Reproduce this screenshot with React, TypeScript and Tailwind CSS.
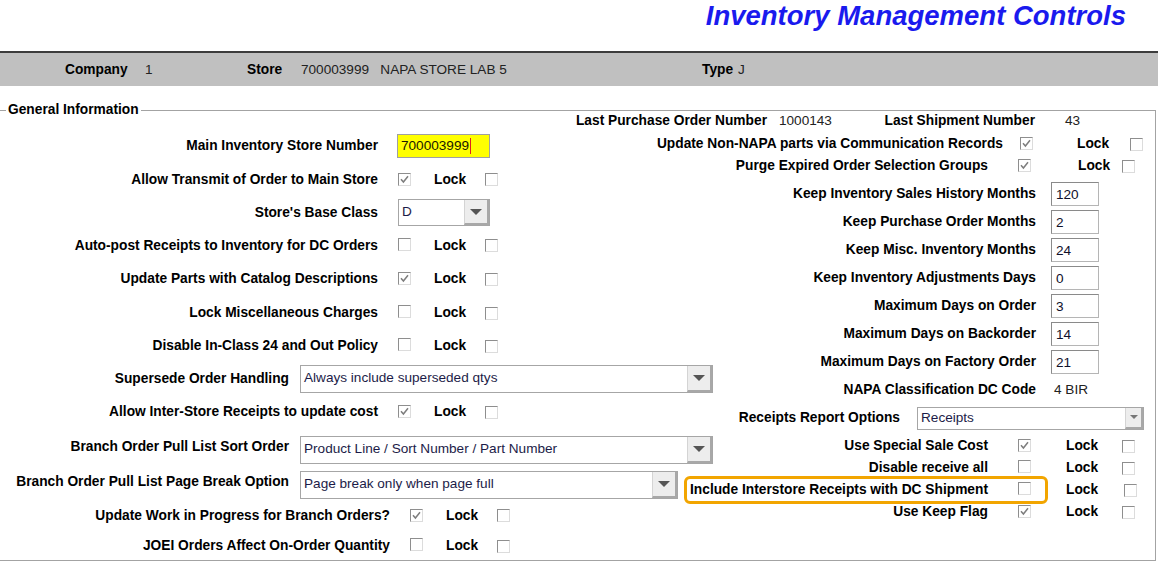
import React from 'react';

const label = 'shrink-0 font-bold text-[13.75px] leading-[16px] text-black whitespace-nowrap';
const value = 'shrink-0 text-[13.6px] leading-[16px] text-[#222] whitespace-nowrap';

function Check({ checked = false }: { checked?: boolean }) {
  return (
    <span className="inline-flex h-[13px] w-[13px] shrink-0 items-center justify-center border border-t-[#8e8e8e] border-l-[#8e8e8e] border-r-[#dcdcdc] border-b-[#dcdcdc] bg-white">
      {checked && (
        <svg width="11" height="11" viewBox="0 0 11 11">
          <path d="M2 5.2 L4.4 8 L9 2.2" fill="none" stroke="#7d7d7d" strokeWidth="1.5" />
        </svg>
      )}
    </span>
  );
}

function Arrow({ small = false }: { small?: boolean }) {
  return (
    <div
      className={
        small
          ? 'flex h-full w-[18px] items-center justify-center border-l border-[#d4d4d4] border-r-2 border-b-2 border-r-[#a8a8a8] border-b-[#a8a8a8] bg-[#ededed]'
          : 'flex h-full w-[25px] items-center justify-center border-l border-[#d4d4d4] border-r-2 border-b-2 border-r-[#a8a8a8] border-b-[#a8a8a8] bg-[#ededed]'
      }
    >
      <span
        className={
          small
            ? 'h-0 w-0 border-l-[4px] border-r-[4px] border-t-[4px] border-l-transparent border-r-transparent border-t-[#777]'
            : 'h-0 w-0 border-l-[6px] border-r-[6px] border-t-[6px] border-l-transparent border-r-transparent border-t-[#555]'
        }
      />
    </div>
  );
}

function Select({ text, className, small = false }: { text: string; className: string; small?: boolean }) {
  return (
    <div className={'flex shrink-0 items-stretch border border-[#a6a6a6] bg-white ' + className}>
      <div className="flex flex-1 items-center overflow-hidden pl-[3px] text-[13.6px] text-[#1c1c48] whitespace-nowrap">
        {text}
      </div>
      <Arrow small={small} />
    </div>
  );
}

function NumBox({ v }: { v: string }) {
  return (
    <div className="ml-[15px] flex h-[24px] w-[48px] shrink-0 items-end border border-t-[#8a8a8a] border-l-[#8a8a8a] border-r-[#b5b5b5] border-b-[#b5b5b5] bg-white pb-[2px] pl-[4px] text-[13.6px] leading-[16px] text-[#10102a]">
      {v}
    </div>
  );
}

// left column row with checkbox + Lock + checkbox
function LeftCheck({ text, checked, h, wide = false }: { text: string; checked?: boolean; h: string; wide?: boolean }) {
  return (
    <div className={'flex items-center ' + h}>
      <span className={(wide ? 'w-[390px] ' : 'w-[378px] ') + 'text-right ' + label}>{text}</span>
      <span className="ml-[20px] w-[36px] shrink-0">
        <Check checked={checked} />
      </span>
      <span className={'w-[51px] ' + label}>Lock</span>
      <Check />
    </div>
  );
}

const numberRows: [string, string][] = [
  ['Keep Inventory Sales History Months', '120'],
  ['Keep Purchase Order Months', '2'],
  ['Keep Misc. Inventory Months', '24'],
  ['Keep Inventory Adjustments Days', '0'],
  ['Maximum Days on Order', '3'],
  ['Maximum Days on Backorder', '14'],
  ['Maximum Days on Factory Order', '21'],
];

export default function App() {
  return (
    <div className="h-[572px] w-[1169px] overflow-hidden bg-white font-['Liberation_Sans',Arial,sans-serif]">
      {/* title */}
      <div className="flex h-[51px] justify-end pr-[43px] pt-[1px]">
        <h1 className="text-[27.5px] font-bold italic leading-[30px] text-[#1a1aee]">Inventory Management Controls</h1>
      </div>

      {/* store bar */}
      <div className="flex h-[35px] w-[1158px] items-center border-t-2 border-[#3c3c3c] bg-[#c0c0c0] pl-[65px]">
        <span className={'w-[80px] ' + label}>Company</span>
        <span className={'w-[102px] ' + value}>1</span>
        <span className={'w-[54px] ' + label}>Store</span>
        <span className={'w-[401px] ' + value}>700003999&nbsp;&nbsp; NAPA STORE LAB 5</span>
        <span className={'w-[36px] ' + label}>Type</span>
        <span className={value}>J</span>
      </div>

      {/* General Information */}
      <div className="relative mt-[24px] flex h-[451px] w-[1156px] border border-l-0 border-[#a3a3a3]">
        <span className={'absolute left-[6px] top-[-9px] bg-white px-[2px] ' + label}>General Information</span>

        {/* left column */}
        <div className="flex w-[560px] shrink-0 flex-col pt-[18px]">
          <div className="flex h-[34px] items-center">
            <span className={'w-[378px] text-right ' + label}>Main Inventory Store Number</span>
            <div className="ml-[19px] flex h-[24px] w-[93px] shrink-0 items-center border border-[#a0a0a0] bg-[#ffff00] pl-[3px] text-[13.6px] text-[#1a1a00]">
              700003999
              <span className="ml-[1px] h-[16px] w-[1px] bg-[#e02020]" />
            </div>
          </div>
          <LeftCheck h="h-[33px]" text="Allow Transmit of Order to Main Store" checked />
          <div className="flex h-[33px] items-center">
            <span className={'w-[378px] text-right ' + label}>Store's Base Class</span>
            <Select text="D" className="ml-[20px] h-[27px] w-[92px]" />
          </div>
          <LeftCheck h="h-[33px]" text="Auto-post Receipts to Inventory for DC Orders" />
          <LeftCheck h="h-[34px]" text="Update Parts with Catalog Descriptions" checked />
          <LeftCheck h="h-[34px]" text="Lock Miscellaneous Charges" />
          <LeftCheck h="h-[32px]" text="Disable In-Class 24 and Out Policy" />
          <div className="flex h-[33px] items-center">
            <span className={'w-[289px] text-right ' + label}>Supersede Order Handling</span>
            <Select text="Always include superseded qtys" className="ml-[11px] h-[28px] w-[413px]" />
          </div>
          <LeftCheck h="h-[34px]" text="Allow Inter-Store Receipts to update cost" checked />
          <div className="flex h-[35px] items-center">
            <span className={'w-[289px] self-start pt-[10px] text-right ' + label}>Branch Order Pull List Sort Order</span>
            <Select text="Product Line / Sort Number / Part Number" className="ml-[11px] mt-[6px] h-[28px] w-[413px]" />
          </div>
          <div className="flex h-[35px] items-center">
            <span className={'w-[289px] self-start pt-[10px] text-right ' + label}>Branch Order Pull List Page Break Option</span>
            <Select text="Page break only when page full" className="ml-[11px] mt-[6px] h-[28px] w-[378px]" />
          </div>
          <LeftCheck h="h-[33px]" wide text="Update Work in Progress for Branch Orders?" checked />
          <LeftCheck h="h-[28px]" wide text="JOEI Orders Affect On-Order Quantity" />
        </div>

        {/* right column */}
        <div className="flex flex-1 flex-col">
          <div className="flex h-[20px] items-center">
            <span className={'w-[207px] text-right ' + label}>Last Purchase Order Number</span>
            <span className={'w-[117px] pl-[12px] text-[12.5px] ' + value}>1000143</span>
            <span className={'w-[151px] text-right ' + label}>Last Shipment Number</span>
            <span className={'pl-[30px] ' + value}>43</span>
          </div>

          <div className="mt-[3px] flex h-[20px] items-center">
            <span className={'w-[443px] text-right ' + label}>Update Non-NAPA parts via Communication Records</span>
            <span className="ml-[17px] w-[57px] shrink-0">
              <Check checked />
            </span>
            <span className={'w-[53px] ' + label}>Lock</span>
            <Check />
          </div>

          <div className="mt-[2px] flex h-[20px] items-center">
            <span className={'w-[428px] text-right ' + label}>Purge Expired Order Selection Groups</span>
            <span className="ml-[30px] w-[60px] shrink-0">
              <Check checked />
            </span>
            <span className={'w-[44px] ' + label}>Lock</span>
            <Check />
          </div>

          <div className="mt-[4px] flex flex-col">
            {numberRows.map(([t, v]) => (
              <div key={t} className="flex h-[28px] items-center">
                <span className={'w-[476px] text-right ' + label}>{t}</span>
                <NumBox v={v} />
              </div>
            ))}
            <div className="flex h-[28px] items-center">
              <span className={'w-[476px] text-right ' + label}>NAPA Classification DC Code</span>
              <span className={'ml-[18px] ' + value}>4 BIR</span>
            </div>
            <div className="flex h-[28px] items-center">
              <span className={'w-[340px] text-right ' + label}>Receipts Report Options</span>
              <Select text="Receipts" small className="ml-[17px] h-[23px] w-[227px]" />
            </div>
          </div>

          <div className="mt-[3px] flex flex-col">
            <div className="flex h-[22px] items-center">
              <span className={'w-[428px] text-right ' + label}>Use Special Sale Cost</span>
              <span className="ml-[30px] w-[48px] shrink-0">
                <Check checked />
              </span>
              <span className={'w-[56px] ' + label}>Lock</span>
              <Check />
            </div>
            <div className="flex h-[22px] items-center">
              <span className={'w-[428px] text-right ' + label}>Disable receive all</span>
              <span className="ml-[30px] w-[48px] shrink-0">
                <Check />
              </span>
              <span className={'w-[56px] ' + label}>Lock</span>
              <Check />
            </div>
            <div className="flex h-[22px] items-center">
              <div className="ml-[124px] flex h-[28px] w-[364px] shrink-0 items-center rounded-[6px] border-[3px] border-[#f2a500] pr-[14px]">
                <span className={'flex-1 text-right ' + label}>Include Interstore Receipts with DC Shipment</span>
                <span className="ml-[30px]">
                  <Check />
                </span>
              </div>
              <span className={'ml-[18px] w-[58px] ' + label}>Lock</span>
              <Check />
            </div>
            <div className="flex h-[22px] items-center">
              <span className={'w-[428px] text-right ' + label}>Use Keep Flag</span>
              <span className="ml-[30px] w-[48px] shrink-0">
                <Check checked />
              </span>
              <span className={'w-[56px] ' + label}>Lock</span>
              <Check />
            </div>
          </div>
        </div>
      </div>
    </div>
  );
}
